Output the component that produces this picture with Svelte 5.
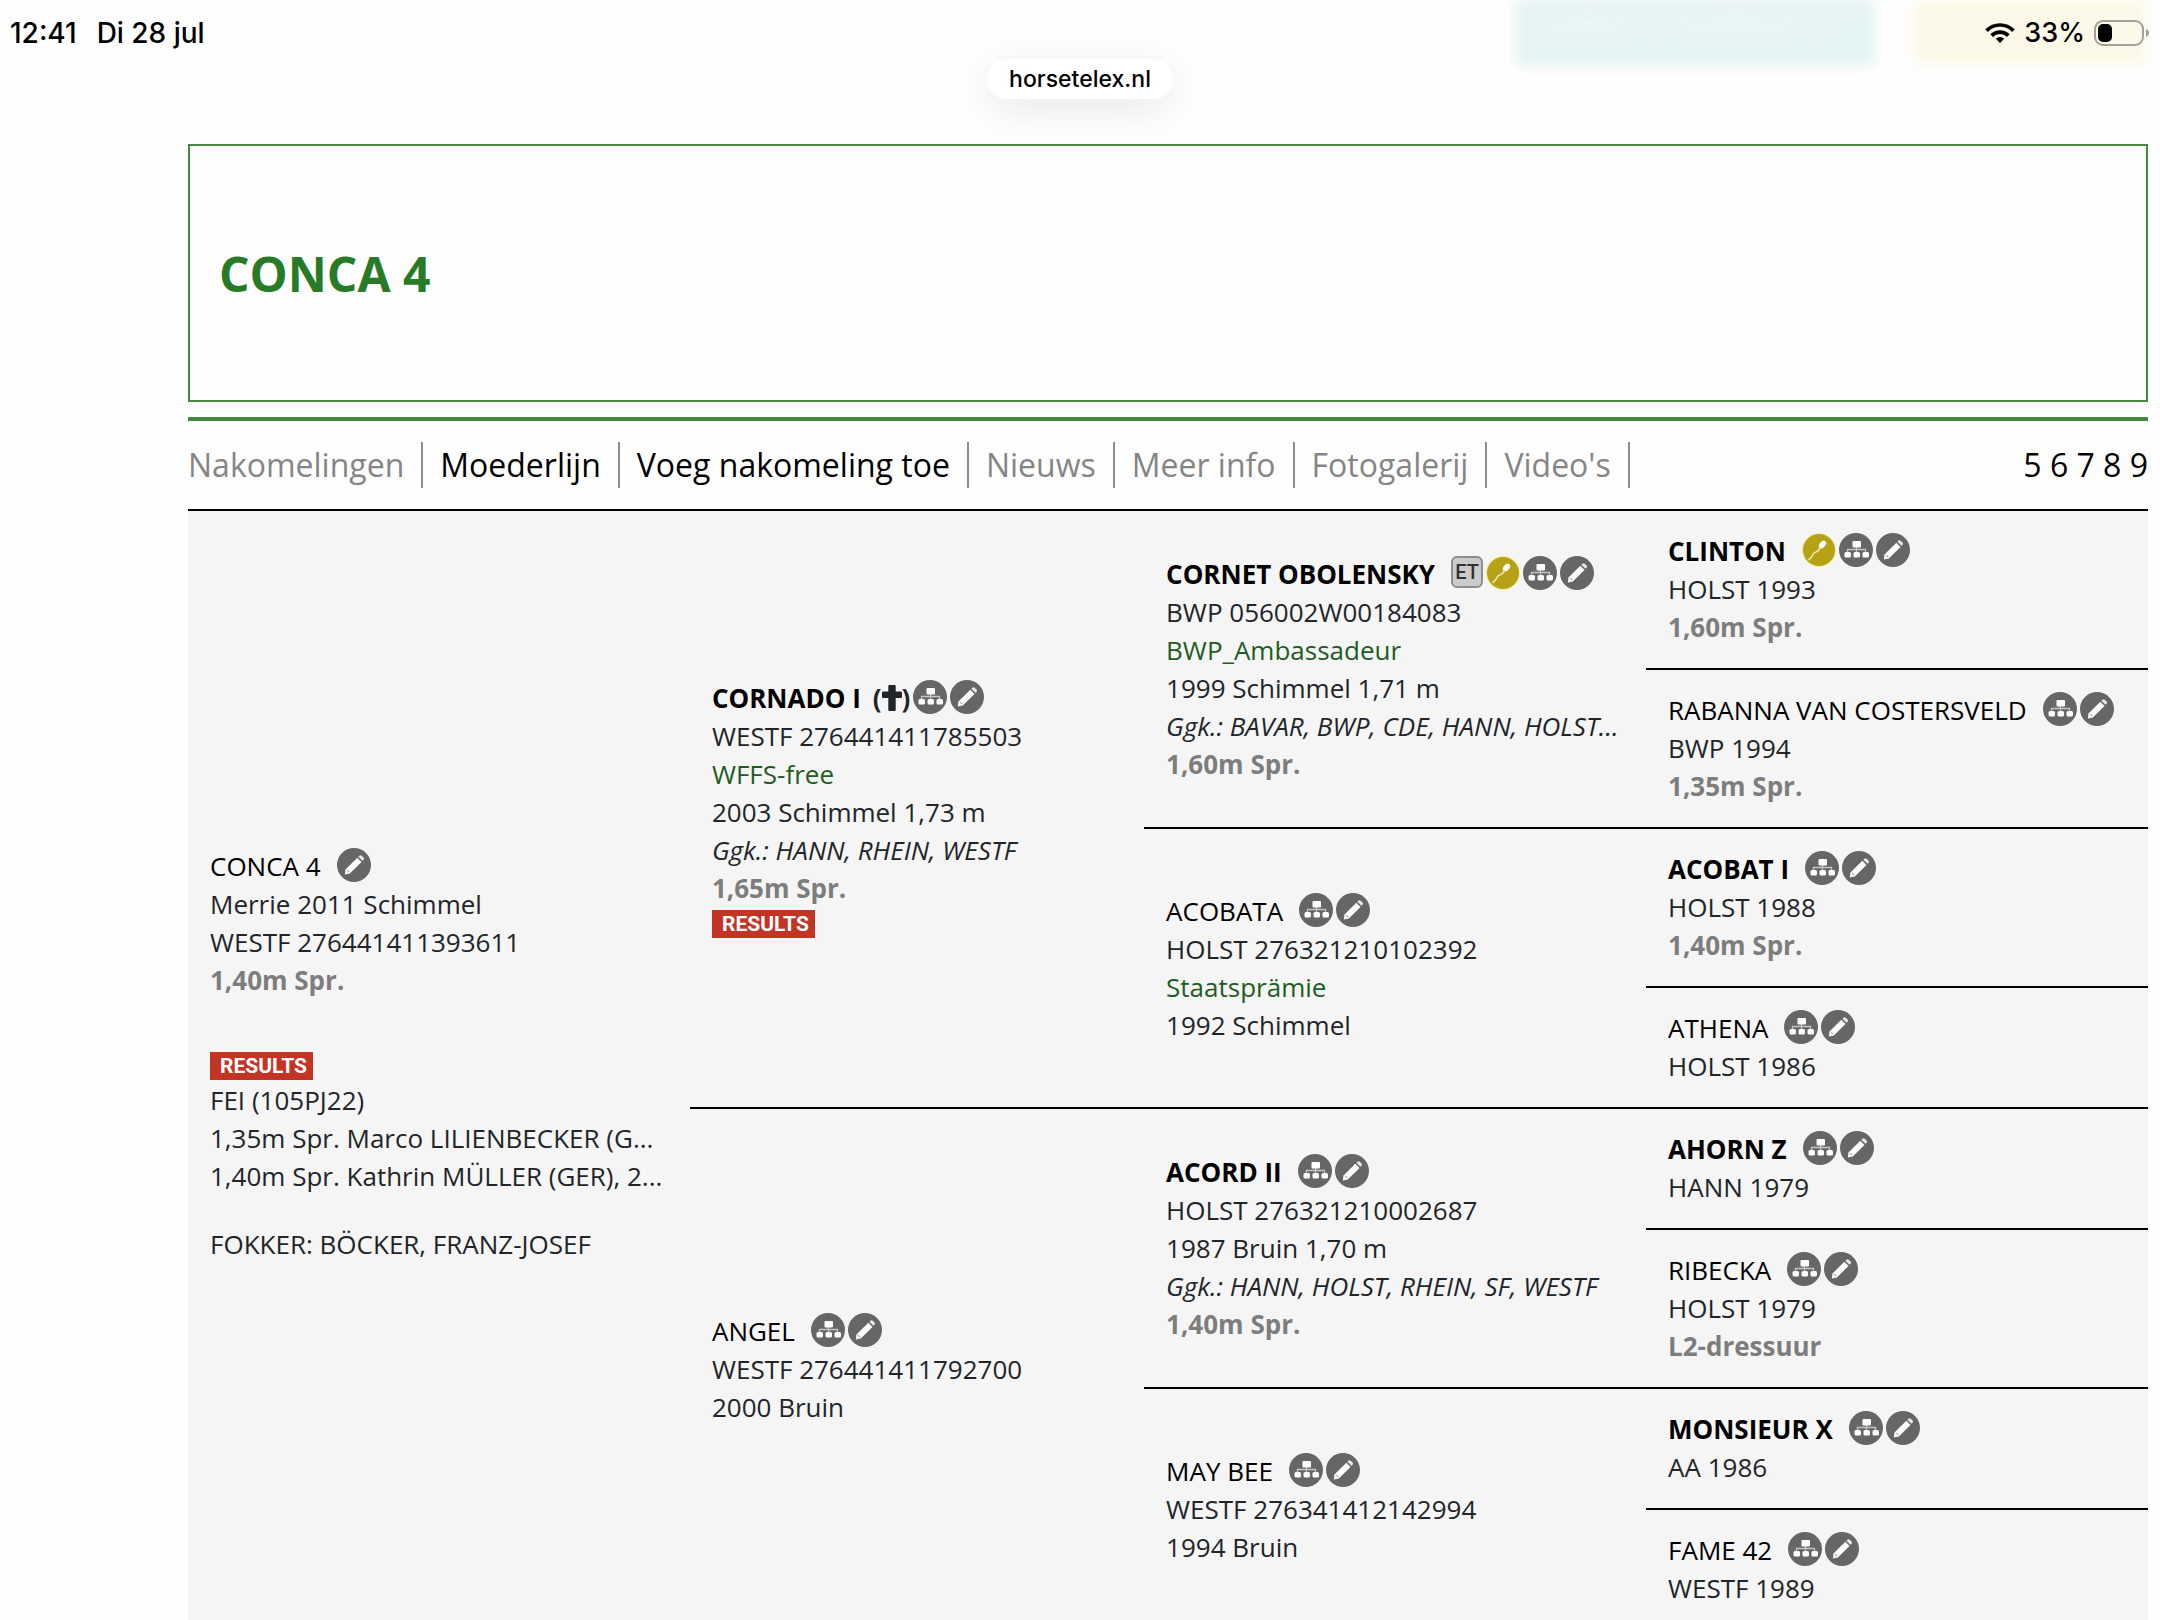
<script>

    let menu = [
        { label: 'Nakomelingen', active: false },
        { label: 'Moederlijn', active: true },
        { label: 'Voeg nakomeling toe', active: true },
        { label: 'Nieuws', active: false },
        { label: 'Meer info', active: false },
        { label: 'Fotogalerij', active: false },
        { label: "Video's", active: false }
    ]

    let generations = [5, 6, 7, 8, 9]

    const conca = {
        name: 'CONCA 4', span: 8, icons: ['edit'],
        lines: ['Merrie 2011 Schimmel', 'WESTF 276441411393611'],
        sport: '1,40m Spr.',
        fei: ['FEI (105PJ22)', '1,35m Spr. Marco LILIENBECKER (G...', '1,40m Spr. Kathrin MÜLLER (GER), 2...'],
        breeder: 'FOKKER: BÖCKER, FRANZ-JOSEF'
    }

    const cornado = {
        name: 'CORNADO I', span: 4, bold: true, dead: true, icons: ['tree', 'edit'],
        lines: ['WESTF 276441411785503'], predicate: 'WFFS-free', born: '2003 Schimmel 1,73 m',
        approved: 'Ggk.: HANN, RHEIN, WESTF', sport: '1,65m Spr.', results: true
    }
    const angel = {
        name: 'ANGEL', span: 4, icons: ['tree', 'edit'],
        lines: ['WESTF 276441411792700'], born: '2000 Bruin'
    }

    const cornet = {
        name: 'CORNET OBOLENSKY', span: 2, bold: true, icons: ['et', 'sperm', 'tree', 'edit'],
        lines: ['BWP 056002W00184083'], predicate: 'BWP_Ambassadeur', born: '1999 Schimmel 1,71 m',
        approved: 'Ggk.: BAVAR, BWP, CDE, HANN, HOLST...', sport: '1,60m Spr.'
    }
    const acobata = {
        name: 'ACOBATA', span: 2, icons: ['tree', 'edit'],
        lines: ['HOLST 276321210102392'], predicate: 'Staatsprämie', born: '1992 Schimmel'
    }
    const acord = {
        name: 'ACORD II', span: 2, bold: true, icons: ['tree', 'edit'],
        lines: ['HOLST 276321210002687'], born: '1987 Bruin 1,70 m',
        approved: 'Ggk.: HANN, HOLST, RHEIN, SF, WESTF', sport: '1,40m Spr.'
    }
    const mayBee = {
        name: 'MAY BEE', span: 2, icons: ['tree', 'edit'],
        lines: ['WESTF 276341412142994'], born: '1994 Bruin'
    }

    const clinton = { name: 'CLINTON', bold: true, icons: ['sperm', 'tree', 'edit'], lines: ['HOLST 1993'], sport: '1,60m Spr.' }
    const rabanna = { name: 'RABANNA VAN COSTERSVELD', icons: ['tree', 'edit'], lines: ['BWP 1994'], sport: '1,35m Spr.' }
    const acobat = { name: 'ACOBAT I', bold: true, icons: ['tree', 'edit'], lines: ['HOLST 1988'], sport: '1,40m Spr.' }
    const athena = { name: 'ATHENA', icons: ['tree', 'edit'], lines: ['HOLST 1986'] }
    const ahorn = { name: 'AHORN Z', bold: true, icons: ['tree', 'edit'], lines: ['HANN 1979'] }
    const ribecka = { name: 'RIBECKA', icons: ['tree', 'edit'], lines: ['HOLST 1979'], sport: 'L2-dressuur' }
    const monsieur = { name: 'MONSIEUR X', bold: true, icons: ['tree', 'edit'], lines: ['AA 1986'] }
    const fame = { name: 'FAME 42', icons: ['tree', 'edit'], lines: ['WESTF 1989'] }

    // one entry per table row, ancestors span the rows of their own parents
    let rows = [
        [conca, cornado, cornet, clinton],
        [rabanna],
        [acobata, acobat],
        [athena],
        [angel, acord, ahorn],
        [ribecka],
        [mayBee, monsieur],
        [fame]
    ]

</script>

{#snippet icon(type)}
    {#if type === 'et'}
        <span class="et">ET</span>
    {:else if type === 'sperm'}
        <a class="icon" href="#sperma" aria-label="Sperma">
            <svg viewBox="0 0 34 34">
                <circle cx="17" cy="17" r="17" fill="#f3ee9a" />
                <circle cx="17" cy="17" r="16" fill="#b7a117" />
                <ellipse cx="20.500" cy="11.500" rx="4.400" ry="2.900" transform="rotate(-50 20.500 11.500)" fill="#fff" />
                <path d="M18.500 14.500c-1.500 2-2 3.800-4 4.200-3 .6-3.200 1.500-4 3.600-.7 1.900-1.800 3-3.500 4.200" fill="none" stroke="#efe7a8" stroke-width="1.600" stroke-linecap="round" />
            </svg>
        </a>
    {:else if type === 'tree'}
        <a class="icon" href="#stamboom" aria-label="Stamboom">
            <svg viewBox="0 0 34 34">
                <circle cx="17" cy="17" r="17" fill="#666" />
                <path d="M17.500 14v5M8.500 20v-3.500h18V20" fill="none" stroke="#c4c4c4" stroke-width="1.300" />
                <g fill="#fff">
                    <rect x="13.500" y="8" width="8.500" height="6.500" rx="1" />
                    <rect x="5.500" y="19" width="6.500" height="5.500" rx="1.500" />
                    <rect x="14.500" y="19" width="6.500" height="5.500" rx="1.500" />
                    <rect x="23.500" y="19" width="6.500" height="5.500" rx="1.500" />
                </g>
            </svg>
        </a>
    {:else}
        <a class="icon" href="#wijzig" aria-label="Wijzig">
            <svg viewBox="0 0 34 34">
                <circle cx="17" cy="17" r="17" fill="#666" />
                <path d="M20.300 9.800l4.200 4.200L12.800 25.600 7.800 26.400l.7-4.800z" fill="#fff" />
                <path d="M21.400 8.700l1-1c.7-.7 1.600-.7 2.300 0l1.800 1.800c.7.700.7 1.600 0 2.300l-1 1z" fill="#e8e8e8" />
                <path d="M10 21.800l2.400 2.400" stroke="#888" stroke-width="1" />
            </svg>
        </a>
    {/if}
{/snippet}

<div class="ad teal"></div>
<div class="ad yellow"></div>

<header>
    <div class="status">
        <span>12:41</span>
        <span>Di 28 jul</span>
        <div class="right">
            <svg class="wifi" viewBox="0 0 30 20">
                <g fill="none" stroke="#000" stroke-width="3.600">
                    <path d="M1.600 7.600a19 19 0 0 1 26.800 0" />
                    <path d="M6.600 12.600a12 12 0 0 1 16.800 0" />
                </g>
                <path d="M15 20l-4.200-4.300a6 6 0 0 1 8.400 0z" />
            </svg>
            <span>33%</span>
            <svg class="battery" viewBox="0 0 56 26">
                <rect x="1" y="1" width="48" height="24" rx="8" fill="none" stroke="#a3a09a" stroke-width="2" />
                <rect x="4" y="4" width="14" height="18" rx="5" />
                <path d="M52 9c2 .8 3 2.200 3 4s-1 3.200-3 4z" fill="#a3a09a" />
            </svg>
        </div>
    </div>
    <div class="address">horsetelex.nl</div>
</header>

<main>
    <div class="title">
        <h1>CONCA 4</h1>
    </div>

    <nav>
        <ul>
            {#each menu as item}
                <li><a href="#menu" class:active={item.active}>{item.label}</a></li>
            {/each}
        </ul>
        <div class="generations">
            {#each generations as g}<a href="#gen{g}">{g}</a>{' '}{/each}
        </div>
    </nav>

    <table>
        <colgroup>
            <col class="wide">
            <col class="small">
            <col class="wide">
            <col class="wide">
        </colgroup>
        <tbody>
            {#each rows as row}
                <tr>
                    {#each row as horse}
                        <td rowspan={horse.span ?? 1}>
                            <div class="name" class:bold={horse.bold}>
                                <a href="#paard">{horse.name}</a>
                                {#if horse.dead}
                                    <span class="dead">(<svg viewBox="0 0 20 26"><path d="M7.500 0h5q1.200 0 1.200 1.200V6.500h5q1.300 0 1.300 1.200v4q0 1.300-1.300 1.300h-5V24.700q0 1.300-1.200 1.300h-5q-1.200 0-1.200-1.300V13h-5Q0 13 0 11.700v-4q0-1.200 1.300-1.200h5V1.200Q6.300 0 7.500 0z" fill="#212529" /></svg>)</span>
                                {/if}
                                <span class="icons">
                                    {#each horse.icons as type}
                                        {@render icon(type)}
                                    {/each}
                                </span>
                            </div>
                            {#each horse.lines as line}
                                <div>{line}</div>
                            {/each}
                            {#if horse.predicate}
                                <div class="predicate">{horse.predicate}</div>
                            {/if}
                            {#if horse.born}
                                <div>{horse.born}</div>
                            {/if}
                            {#if horse.approved}
                                <div class="approved">{horse.approved}</div>
                            {/if}
                            {#if horse.sport}
                                <div class="sport">{horse.sport}</div>
                            {/if}
                            {#if horse.results}
                                <a class="results" href="#results">RESULTS</a>
                            {/if}
                            {#if horse.fei}
                                <div class="fei">
                                    <a class="results" href="#results">RESULTS</a>
                                    {#each horse.fei as line}
                                        <div>{line}</div>
                                    {/each}
                                </div>
                            {/if}
                            {#if horse.breeder}
                                <p>{horse.breeder}</p>
                            {/if}
                        </td>
                    {/each}
                </tr>
            {/each}
        </tbody>
    </table>
</main>

<style>

:global(body) {
    background: #fefefe;
    font-family: "Open Sans", "Noto Sans", sans-serif;
    color: #212529;
}

a {
    color: inherit;
    text-decoration: none;
}

/* banners that shimmer through the status bar */
.ad {
    position: absolute;
    top: 0;
    filter: blur(6px);
}

.teal {
    right: 286px;
    width: 358px;
    height: 66px;
    background:
        radial-gradient(ellipse 60px 18px at 70px 26px, #eef7f7, transparent),
        radial-gradient(ellipse 120px 20px at 220px 26px, #ecf6f6, transparent),
        #e4f3f3;
}

.yellow {
    right: 14px;
    width: 232px;
    height: 64px;
    background: #fcf8e7;
}

header {
    position: relative;
    font-family: Inter, "Liberation Sans", sans-serif;
    font-weight: 500;
    color: #000;
    padding: 17px 10px 45px;
}

.status {
    display: flex;
    align-items: center;
    gap: 20px;
    height: 32px;
    font-size: 28px;
    line-height: 32px;
}

.right {
    display: flex;
    align-items: center;
    gap: 9px;
    margin-left: auto;
    font-size: 27px;
}

.wifi {
    width: 30px;
    height: 20px;
}

.battery {
    width: 56px;
    height: 26px;
}

.address {
    width: fit-content;
    margin: 10px auto 0;
    padding: 0 22px;
    border-radius: 20px;
    background: #fff;
    box-shadow: 0 10px 40px rgba(0, 0, 0, 0.09);
    font-size: 23px;
    line-height: 40px;
}

main {
    padding: 0 12px 0 188px;
}

.title {
    border: 2px solid #46893f;
    padding: 95px 29px 93px;
}

h1 {
    margin: 0;
    font-size: 48px;
    line-height: 66px;
    color: #277a26;
}

nav {
    display: flex;
    justify-content: space-between;
    align-items: center;
    margin-top: 15px;
    padding: 21px 0;
    border-top: 4px solid #40883f;
    font-size: 32px;
    line-height: 46px;
}

ul {
    display: flex;
    gap: 17px;
    margin: 0;
    padding: 0;
    list-style: none;
}

li {
    padding-right: 17px;
    border-right: 2px solid #8c8c8c;
    color: #858585;
}

.active,
.generations {
    color: #000;
}

table {
    width: 100%;
    table-layout: fixed;
    border-collapse: separate;
    border-spacing: 0;
    background: #f5f5f5;
    font-size: 26px;
    line-height: 38px;
}

.wide {
    width: 21%;
}

.small {
    width: 19%;
}

td {
    padding: 21px 20px 22px 22px;
    border-top: 2px solid #000;
    vertical-align: middle;
    white-space: nowrap;
}

.name {
    display: flex;
    height: 38px;
    color: #000;
}

.bold {
    font-weight: bold;
}

.icons {
    display: flex;
    gap: 3px;
    margin: 1px 0 0 16px;
}

.dead {
    display: flex;
    margin-left: 12px;
    color: #212529;
}

.dead svg {
    width: 20px;
    height: 26px;
    margin-top: 6px;
}

.dead + .icons {
    margin-left: 3px;
}

.icon,
.icon svg {
    display: block;
    width: 34px;
    height: 34px;
}

.et {
    box-sizing: border-box;
    width: 32px;
    height: 32px;
    border: 2px solid #8d8d8d;
    border-radius: 6px;
    background: #cbcbcb;
    color: #333;
    font: 500 20px/29px Roboto, sans-serif;
    text-align: center;
}

.predicate {
    color: #1f5c1f;
}

.approved {
    font-style: italic;
}

.sport {
    font-weight: bold;
    color: #7d7d7d;
}

.results {
    display: block;
    box-sizing: border-box;
    width: 103px;
    height: 28px;
    margin: 3px 0 1px;
    padding-left: 4px;
    background: #c23424;
    color: #fff;
    font: bold 21px/29px Roboto, sans-serif;
    text-align: center;
}

.fei {
    margin-top: 53px;
}

p {
    margin: 30px 0;
}

</style>
